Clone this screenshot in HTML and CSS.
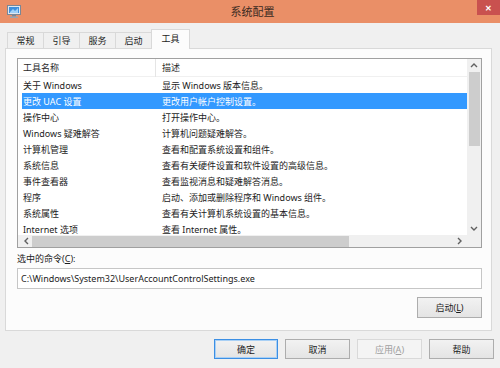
FILE: index.html
```html
<!DOCTYPE html>
<html lang="zh-CN">
<head>
<meta charset="UTF-8">
<title>系统配置</title>
<link rel="stylesheet" href="styles.css">
</head>
<body>
<div class="titlebar">
	<svg class="appicon" width="14" height="13" viewBox="0 0 14 13">
		<rect x="0.5" y="0.5" width="13" height="9" fill="#dfe6ee" stroke="#7a8796"/>
		<rect x="2" y="2" width="10" height="6" fill="#3f8fdc"/>
		<path d="M3 7 L6 4 L8 6 L11 3 L11 8 L3 8 Z" fill="#9fd0f7"/>
		<rect x="5" y="10" width="4" height="1.5" fill="#7a8796"/>
		<rect x="3" y="11.5" width="8" height="1.5" fill="#9aa5b1"/>
	</svg>
	<div class="title">系统配置</div>
	<div class="close">✕</div>
</div>

<div class="tabs">
	<div class="tab">常规</div>
	<div class="tab">引导</div>
	<div class="tab">服务</div>
	<div class="tab">启动</div>
	<div class="tab active">工具</div>
</div>

<div class="panel">
	<div class="listbox">
		<div class="list">
			<div class="row head">
				<div class="c1">工具名称</div>
				<div class="c2">描述</div>
			</div>
			<div class="row"><div class="c1">关于 Windows</div><div class="c2">显示 Windows 版本信息。</div></div>
			<div class="row sel"><div class="c1">更改 UAC 设置</div><div class="c2">更改用户帐户控制设置。</div></div>
			<div class="row"><div class="c1">操作中心</div><div class="c2">打开操作中心。</div></div>
			<div class="row"><div class="c1">Windows 疑难解答</div><div class="c2">计算机问题疑难解答。</div></div>
			<div class="row"><div class="c1">计算机管理</div><div class="c2">查看和配置系统设置和组件。</div></div>
			<div class="row"><div class="c1">系统信息</div><div class="c2">查看有关硬件设置和软件设置的高级信息。</div></div>
			<div class="row"><div class="c1">事件查看器</div><div class="c2">查看监视消息和疑难解答消息。</div></div>
			<div class="row"><div class="c1">程序</div><div class="c2">启动、添加或删除程序和 Windows 组件。</div></div>
			<div class="row"><div class="c1">系统属性</div><div class="c2">查看有关计算机系统设置的基本信息。</div></div>
			<div class="row"><div class="c1">Internet 选项</div><div class="c2">查看 Internet 属性。</div></div>
		</div>
		<div class="vscroll">
			<svg class="arrow" width="8" height="5" viewBox="0 0 8 5"><path d="M1 4 L4 1 L7 4" fill="none" stroke="#606060" stroke-width="1.4"/></svg>
			<div class="vthumb"></div>
			<div class="vspace"></div>
			<svg class="arrow" width="8" height="5" viewBox="0 0 8 5"><path d="M1 1 L4 4 L7 1" fill="none" stroke="#606060" stroke-width="1.4"/></svg>
		</div>
		<div class="hscroll">
			<svg class="arrow" width="5" height="8" viewBox="0 0 5 8"><path d="M4 1 L1 4 L4 7" fill="none" stroke="#606060" stroke-width="1.4"/></svg>
			<div class="hthumb"></div>
			<div class="hspace"></div>
			<svg class="arrow" width="5" height="8" viewBox="0 0 5 8"><path d="M1 1 L4 4 L1 7" fill="none" stroke="#606060" stroke-width="1.4"/></svg>
		</div>
		<div class="corner"></div>
	</div>

	<div class="label">选中的命令(<u>C</u>):</div>
	<div class="command">C:\Windows\System32\UserAccountControlSettings.exe</div>
	<div class="launch">
		<div class="btn">启动(<u>L</u>)</div>
	</div>
</div>

<div class="buttons">
	<div class="btn default">确定</div>
	<div class="btn">取消</div>
	<div class="btn disabled">应用(<u>A</u>)</div>
	<div class="btn">帮助</div>
</div>
</body>
</html>
```

FILE: styles.css
```css
body {
	margin: 0;
	width: 500px;
	height: 368px;
	overflow: hidden;
	background: #f0f0f0;
	font-family: "Noto Sans", "Noto Sans CJK SC", sans-serif;
	font-size: 9px;
	color: #1c1c1c;
}

.titlebar {
	height: 23px;
	background: #ea8f67;
	display: flex;
	align-items: center;
	position: relative;
}
.appicon {
	margin-left: 7px;
	margin-top: -1px;
}
.title {
	flex: 1;
	text-align: center;
	font-size: 11px;
	color: #3a2a22;
	margin-left: 7px;
	margin-top: -1px;
}
.close {
	align-self: flex-start;
	width: 23px;
	height: 15px;
	background: #c9514f;
	color: #fff;
	font-size: 8px;
	font-weight: bold;
	display: flex;
	align-items: center;
	justify-content: center;
}

.tabs {
	display: flex;
	align-items: flex-end;
	height: 20px;
	margin-top: 6px;
	padding-left: 7px;
	position: relative;
	z-index: 1;
}
.tab {
	width: 37px;
	height: 16px;
	margin-bottom: 1px;
	border: 1px solid #d9d9d9;
	border-bottom: 0;
	margin-right: -1px;
	background: #f0f0f0;
	display: flex;
	align-items: center;
	justify-content: center;
	box-sizing: border-box;
}
.tab.active {
	width: 39px;
	height: 20px;
	margin-bottom: 0;
	background: #fcfcfc;
	padding-bottom: 3px;
}

.panel {
	margin: -1px 8px 0 5px;
	height: 283px;
	box-sizing: border-box;
	border: 1px solid #d9d9d9;
	background: #fcfcfc;
	padding: 9px 9px 0 11px;
}

.listbox {
	height: 190px;
	box-sizing: border-box;
	border: 1px solid #a0a0a0;
	background: #fff;
	display: grid;
	grid-template-columns: 1fr 14px;
	grid-template-rows: 1fr 12px;
}
.list {
	overflow: hidden;
	padding-left: 4px;
}
.row {
	display: flex;
	height: 16px;
	align-items: center;
	white-space: nowrap;
}
.row .c1 {
	width: 134px;
	padding-left: 1px;
	box-sizing: border-box;
}
.row .c2 {
	padding-left: 6px;
}
.row.head {
	height: 18px;
	margin-left: -4px;
	padding-left: 4px;
	border-bottom: 1px solid #f0f0f0;
	box-sizing: border-box;
	color: #2a2a2a;
}
.row.head .c1 {
	border-right: 1px solid #e5e5e5;
	height: 18px;
	display: flex;
	align-items: center;
}
.row.sel {
	background: #3399ff;
	color: #fff;
}

.vscroll {
	background: #f0f0f0;
	display: flex;
	flex-direction: column;
	align-items: center;
}
.vscroll .arrow {
	margin: 4px 0;
}
.vthumb {
	width: 11px;
	height: 74px;
	background: #cdcdcd;
	margin-top: 0;
}
.vspace {
	flex: 1;
}
.hscroll {
	background: #f0f0f0;
	display: flex;
	align-items: center;
	padding: 0 5px 0 6px;
}
.hthumb {
	width: 317px;
	height: 11px;
	margin-left: 3px;
	background: #cdcdcd;
}
.hspace {
	flex: 1;
}
.corner {
	background: #f0f0f0;
}

.label {
	height: 20px;
	display: flex;
	align-items: center;
	padding-top: 1px;
	box-sizing: border-box;
}
.command {
	height: 21px;
	box-sizing: border-box;
	border: 1px solid #c6c6c6;
	background: #fff;
	display: flex;
	align-items: center;
	padding-left: 3px;
}
.launch {
	display: flex;
	justify-content: flex-end;
	margin-top: 8px;
}
.launch .btn {
	height: 21px;
}

.btn {
	width: 65px;
	height: 20px;
	box-sizing: border-box;
	border: 1px solid #adadad;
	background: linear-gradient(#f2f2f2, #e4e4e4);
	display: flex;
	align-items: center;
	justify-content: center;
}
.btn.default {
	border-color: #3c8fe4;
	box-shadow: inset 0 0 0 1px #a9d0f5;
	width: 64px;
}
.btn.disabled {
	color: #a0a0a0;
	border-color: #d9d9d9;
	background: #f4f4f4;
}

.buttons {
	display: flex;
	justify-content: flex-end;
	gap: 7px;
	margin-top: 8px;
	padding-right: 6px;
}
```
